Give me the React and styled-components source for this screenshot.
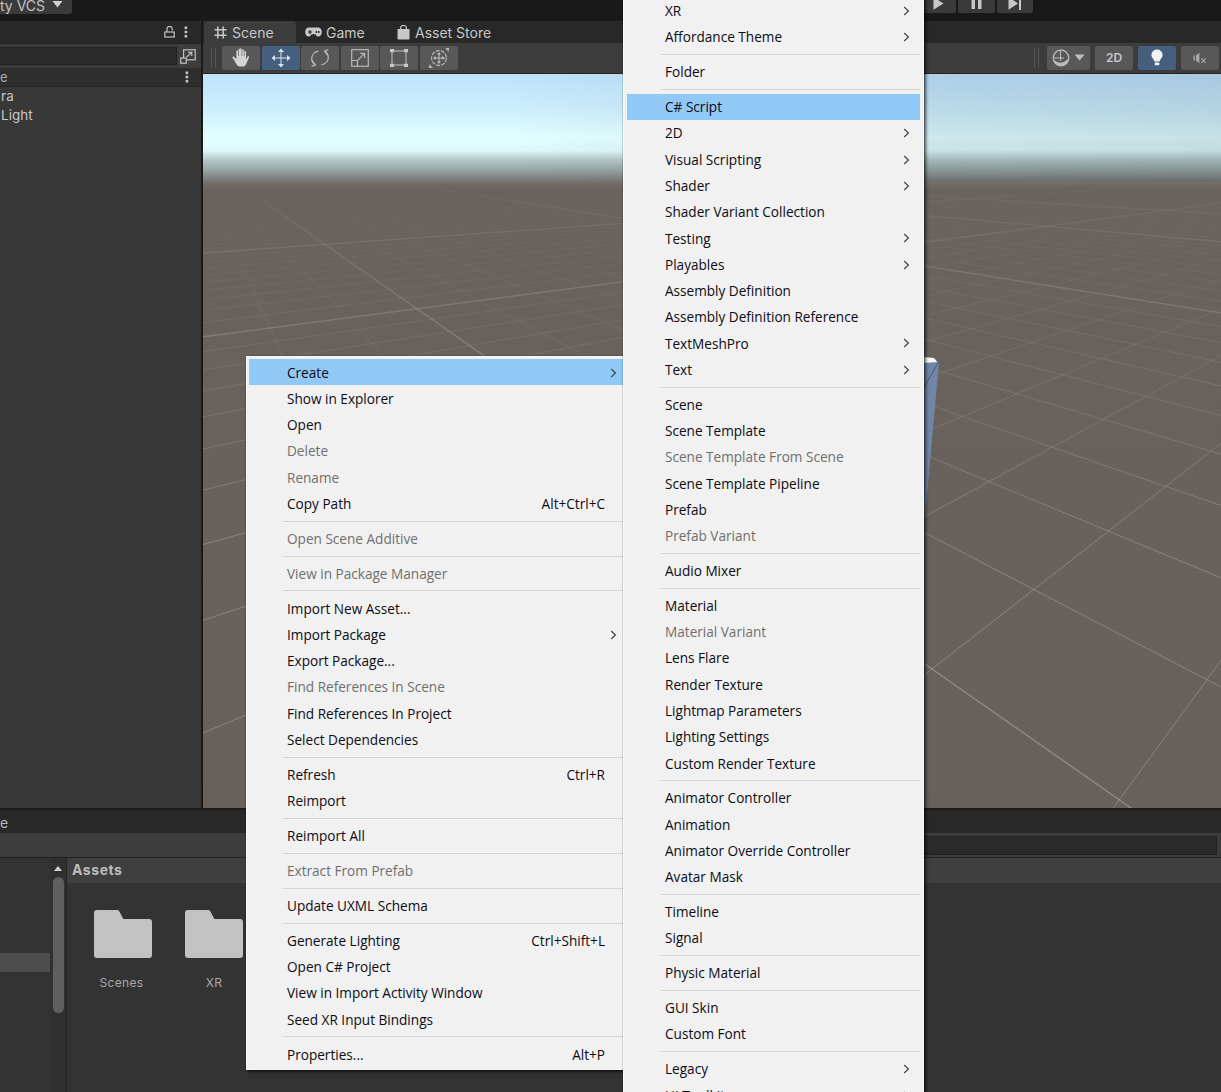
import React from 'react';
import styled, { createGlobalStyle } from 'styled-components';

const Global = createGlobalStyle`
  html, body { margin: 0; padding: 0; background: #191919; }
  #root { width: 1221px; height: 1092px; overflow: hidden; }
`;

const Page = styled.div`
  position: relative;
  width: 1221px;
  height: 1092px;
  overflow: hidden;
  background: #191919;
  font-family: Inter, "Liberation Sans", sans-serif;
  color: #c4c4c4;
  display: flex;
  flex-direction: column;
`;

/* ---------- top bar ---------- */
const TopBar = styled.div`
  height: 21px;
  flex: none;
  display: flex;
  align-items: flex-start;
  justify-content: space-between;
  padding-right: 188px;
  background: #191919;
`;
const VcsButton = styled.div`
  width: 72px;
  height: 14px;
  background: #3a3a3a;
  border-bottom-right-radius: 3px;
  display: flex;
  align-items: center;
  gap: 7px;
  font-size: 14px;
  color: #c2c2c2;
  white-space: nowrap;
  overflow: hidden;
  svg { flex: none; margin-top: -5px; }
  span { margin-top: -3px; }
`;
const PlayGroup = styled.div`
  display: flex;
  gap: 2px;
`;
const PlayBtn = styled.div`
  width: ${p => p.$w}px;
  height: 13px;
  background: #3a3a3a;
  border-bottom-left-radius: 2px;
  border-bottom-right-radius: 2px;
  display: flex;
  justify-content: center;
  align-items: flex-start;
`;

/* ---------- main ---------- */
const Main = styled.div`
  height: 787px;
  flex: none;
  display: grid;
  grid-template-columns: 201px 1fr;
  column-gap: 2px;
`;
const Panel = styled.div`
  display: flex;
  flex-direction: column;
  min-width: 0;
  background: #383838;
`;
const TabBar = styled.div`
  height: 22px;
  flex: none;
  background: #282828;
  display: flex;
  align-items: stretch;
`;
const LeftTabBar = styled(TabBar)`
  justify-content: flex-end;
  align-items: center;
  gap: 9px;
  padding-right: 13px;
  border-top-right-radius: 4px;
`;
const SearchRow = styled.div`
  height: 25px;
  flex: none;
  background: #3c3c3c;
  border-top: 1px solid #232323;
  box-sizing: border-box;
  display: flex;
  align-items: center;
`;
const SearchField = styled.div`
  flex: 1;
  height: 18px;
  background: #2a2a2a;
  border: 1px solid #212121;
  border-left: 0;
  box-sizing: border-box;
`;
const SearchAddon = styled.div`
  width: 22px;
  height: 20px;
  margin-right: 2px;
  display: flex;
  align-items: center;
  justify-content: center;
  background: #3e3e3e;
  border-radius: 3px;
`;
const TreeHeader = styled.div`
  height: 19px;
  flex: none;
  background: #2e2e2e;
  border-bottom: 1px solid #262626;
  box-sizing: border-box;
  display: flex;
  align-items: center;
  justify-content: space-between;
  padding-right: 12px;
  font-size: 13px;
  color: #aaa;
`;
const TreeList = styled.div`
  flex: 1;
  background: #383838;
  padding-left: 1px;
`;
const TreeRow = styled.div`
  height: 19px;
  line-height: 19px;
  font-size: 13.4px;
  letter-spacing: 0.1px;
  color: #c8c8c8;
`;

const Tab = styled.div`
  display: flex;
  align-items: center;
  gap: ${p => p.$gap}px;
  width: ${p => p.$w}px;
  padding-left: ${p => p.$pl}px;
  box-sizing: border-box;
  font-size: 14px;
  color: #c6c6c6;
  background: ${p => (p.$active ? '#3c3c3c' : 'transparent')};
  border-top-left-radius: 3px;
  border-top-right-radius: 3px;
  margin-left: ${p => p.$ml || 0}px;
`;
const Toolbar = styled.div`
  height: 31px;
  flex: none;
  box-sizing: border-box;
  background: #3c3c3c;
  border-bottom: 1px solid #232323;
  display: flex;
  align-items: center;
  justify-content: space-between;
  padding: 0 2px 1px 8px;
`;
const ToolGroup = styled.div`
  display: flex;
  align-items: center;
  gap: ${p => p.$gap || 1.5}px;
`;
const Grip = styled.div`
  width: 5px;
  height: 20px;
  border-left: 1px solid #555;
  border-right: 1px solid #555;
  box-sizing: border-box;
  margin-right: ${p => p.$mr}px;
`;
const ToolBtn = styled.div`
  width: ${p => p.$w || 38}px;
  height: 24px;
  border-radius: 2px;
  background: ${p => (p.$on ? '#44607e' : '#585858')};
  display: flex;
  align-items: center;
  justify-content: center;
  gap: 4px;
  color: #c8c8c8;
  font-size: 12px;
  font-weight: 600;
`;
const SceneView = styled.div`
  flex: 1;
  min-height: 0;
  background: #66605b;
  svg { display: block; }
`;

/* ---------- bottom ---------- */
const Bottom = styled.div`
  flex: 1;
  display: flex;
  flex-direction: column;
  border-top: 2px solid #1c1c1c;
  background: #333;
`;
const BottomTabs = styled.div`
  height: 23px;
  flex: none;
  background: #282828;
  font-size: 14px;
  line-height: 25px;
  color: #b8b8b8;
`;
const BottomTools = styled.div`
  height: 24px;
  flex: none;
  box-sizing: border-box;
  background: #3c3c3c;
  padding: 3px 4px 2px 650px;
`;
const BottomSearch = styled.div`
  height: 19px;
  background: #2a2a2a;
  border: 1px solid #212121;
  box-sizing: border-box;
`;
const Browser = styled.div`
  flex: 1;
  display: grid;
  grid-template-columns: 50px 17px 1fr;
  border-top: 1px solid #232323;
  min-height: 0;
`;
const FolderTree = styled.div`
  background: #333;
  padding-top: 95px;
`;
const TreeSel = styled.div`
  height: 19px;
  background: #4d4d4d;
`;
const ScrollTrack = styled.div`
  background: #303030;
  border-right: 1px solid #232323;
  display: flex;
  flex-direction: column;
  align-items: center;
  padding-top: 8px;
  gap: 6px;
`;
const ScrollUp = styled.div`
  width: 0;
  height: 0;
  border-left: 4px solid transparent;
  border-right: 4px solid transparent;
  border-bottom: 5px solid #d0d0d0;
`;
const ScrollThumb = styled.div`
  width: 11px;
  height: 136px;
  border-radius: 6px;
  background: #5f5f5f;
`;
const AssetArea = styled.div`
  display: flex;
  flex-direction: column;
  min-width: 0;
`;
const AssetHeader = styled.div`
  height: 25px;
  line-height: 23px;
  flex: none;
  padding-left: 5px;
  background: #3f3f3f;
  font-size: 14px;
  font-weight: 700;
  letter-spacing: 0.55px;
  color: #bdbdbd;
`;
const AssetGrid = styled.div`
  display: flex;
  gap: 33px;
  padding: 27px 0 0 27px;
`;
const AssetTile = styled.div`
  width: 58px;
  display: flex;
  flex-direction: column;
  align-items: center;
  gap: 17px;
  font-size: 12px;
  letter-spacing: 0.3px;
  color: #a8a8a8;
`;
const AssetLabel = styled.span`
  margin-left: ${p => p.$nudge || 0}px;
`;

/* ---------- context menus ---------- */
const Menu = styled.div`
  position: absolute;
  left: ${p => p.$x}px;
  top: ${p => p.$y}px;
  width: ${p => p.$w}px;
  box-sizing: border-box;
  padding: 2px ${p => p.$pad}px;
  background: #f1f1f1;
  border: 1px solid #f8f8f8;
  box-shadow: 2px 2px 3px rgba(0, 0, 0, 0.65), 0 0 1px rgba(0, 0, 0, 0.6);
  font-family: "Open Sans", "Noto Sans", sans-serif;
  font-size: 13.6px;
  color: #0c0c14;
`;
const Row = styled.div`
  height: 26.27px;
  box-sizing: border-box;
  display: flex;
  align-items: center;
  justify-content: space-between;
  padding: 0 22px 0 38px;
  position: relative;
  white-space: nowrap;
  color: ${p => (p.$off ? '#6f6f6f' : '#0c0c14')};
  background: ${p => (p.$hot ? '#90c8f6' : 'transparent')};
`;
const Chevron = styled.svg`
  position: absolute;
  right: 10px;
  top: 8.5px;
`;
const Sep = styled.div`
  height: 8.65px;
  box-sizing: border-box;
  margin-left: 34px;
  padding-top: 4px;
  &::after {
    content: '';
    display: block;
    height: 1px;
    background: #d6d6d6;
  }
`;

/* ---------- data ---------- */
const S = 'sep';
const leftMenu = [
  { t: 'Create', arrow: 1, hot: 1 }, { t: 'Show in Explorer' }, { t: 'Open' },
  { t: 'Delete', off: 1 }, { t: 'Rename', off: 1 }, { t: 'Copy Path', key: 'Alt+Ctrl+C' }, S,
  { t: 'Open Scene Additive', off: 1 }, S,
  { t: 'View in Package Manager', off: 1 }, S,
  { t: 'Import New Asset...' }, { t: 'Import Package', arrow: 1 }, { t: 'Export Package...' },
  { t: 'Find References In Scene', off: 1 }, { t: 'Find References In Project' }, { t: 'Select Dependencies' }, S,
  { t: 'Refresh', key: 'Ctrl+R' }, { t: 'Reimport' }, S,
  { t: 'Reimport All' }, S,
  { t: 'Extract From Prefab', off: 1 }, S,
  { t: 'Update UXML Schema' }, S,
  { t: 'Generate Lighting', key: 'Ctrl+Shift+L' }, { t: 'Open C# Project' },
  { t: 'View in Import Activity Window' }, { t: 'Seed XR Input Bindings' }, S,
  { t: 'Properties...', key: 'Alt+P' },
];
const rightMenu = [
  { t: 'XR', arrow: 1 }, { t: 'Affordance Theme', arrow: 1 }, S,
  { t: 'Folder' }, S,
  { t: 'C# Script', hot: 1 }, { t: '2D', arrow: 1 }, { t: 'Visual Scripting', arrow: 1 }, { t: 'Shader', arrow: 1 },
  { t: 'Shader Variant Collection' }, { t: 'Testing', arrow: 1 }, { t: 'Playables', arrow: 1 },
  { t: 'Assembly Definition' }, { t: 'Assembly Definition Reference' }, { t: 'TextMeshPro', arrow: 1 }, { t: 'Text', arrow: 1 }, S,
  { t: 'Scene' }, { t: 'Scene Template' }, { t: 'Scene Template From Scene', off: 1 }, { t: 'Scene Template Pipeline' },
  { t: 'Prefab' }, { t: 'Prefab Variant', off: 1 }, S,
  { t: 'Audio Mixer' }, S,
  { t: 'Material' }, { t: 'Material Variant', off: 1 }, { t: 'Lens Flare' }, { t: 'Render Texture' },
  { t: 'Lightmap Parameters' }, { t: 'Lighting Settings' }, { t: 'Custom Render Texture' }, S,
  { t: 'Animator Controller' }, { t: 'Animation' }, { t: 'Animator Override Controller' }, { t: 'Avatar Mask' }, S,
  { t: 'Timeline' }, { t: 'Signal' }, S,
  { t: 'Physic Material' }, S,
  { t: 'GUI Skin' }, { t: 'Custom Font' }, S,
  { t: 'Legacy', arrow: 1 }, { t: 'UI Toolkit', arrow: 1 },
];

const MenuList = ({ items, ...rest }) => (
  <Menu {...rest}>
    {items.map((it, i) =>
      it === S ? (
        <Sep key={i} />
      ) : (
        <Row key={i} $off={it.off} $hot={it.hot}>
          <span>{it.t}</span>
          {it.key && <span>{it.key}</span>}
          {it.arrow && (
            <Chevron width="7" height="10" viewBox="0 0 7 10">
              <path d="M1.2 1 L5.4 5 L1.2 9" fill="none" stroke="#444" strokeWidth="1.2" />
            </Chevron>
          )}
        </Row>
      )
    )}
  </Menu>
);

/* ---------- icons ---------- */
const Dots = () => (
  <svg width="4" height="12" viewBox="0 0 4 12" fill="#c4c4c4">
    <rect x="0.6" y="0.5" width="2.6" height="2.6" />
    <rect x="0.6" y="4.7" width="2.6" height="2.6" />
    <rect x="0.6" y="8.9" width="2.6" height="2.6" />
  </svg>
);
const Lock = () => (
  <svg width="11" height="12" viewBox="0 0 11 12" fill="none" stroke="#c4c4c4" strokeWidth="1.2">
    <rect x="0.8" y="6" width="9.4" height="5" />
    <path d="M3 6 V3 A2.6 2.6 0 0 1 8.2 3 V4.4" />
  </svg>
);
const ObjectPick = () => (
  <svg width="16" height="15" viewBox="0 0 16 15" fill="none" stroke="#c4c4c4" strokeWidth="1.2">
    <rect x="3.6" y="0.8" width="11.6" height="10" />
    <rect x="0.7" y="9" width="5.6" height="5.2" fill="#3e3e3e" />
    <path d="M6.6 8 L11.6 3.6 M8.2 3.4 H11.8 V7" />
  </svg>
);
const GridIcon = () => (
  <svg width="13" height="13" viewBox="0 0 13 13" stroke="#c8c8c8" strokeWidth="1.5" fill="none">
    <path d="M3.8 0.5 V12.5 M9.2 0.5 V12.5 M0.5 3.8 H12.5 M0.5 9.2 H12.5" />
  </svg>
);
const GameIcon = () => (
  <svg width="17" height="10" viewBox="0 0 17 10">
    <path d="M4 0.4 H13 C15.4 0.4 16.8 2.4 16.8 5 C16.8 7.8 15.4 9.6 13.2 9.6 C11.8 9.6 11.2 8 10.2 7.2 H6.8 C5.8 8 5.2 9.6 3.8 9.6 C1.6 9.6 0.2 7.8 0.2 5 C0.2 2.4 1.6 0.4 4 0.4 Z" fill="#c8c8c8" />
    <path d="M3 5 H7 M5 3 V7" stroke="#282828" strokeWidth="1.2" />
    <circle cx="11.4" cy="5" r="1" fill="#282828" />
    <circle cx="13.8" cy="5" r="1" fill="#282828" />
  </svg>
);
const BagIcon = () => (
  <svg width="13" height="15" viewBox="0 0 13 15">
    <path d="M0.5 4 H12.5 V13.4 A1.2 1.2 0 0 1 11.3 14.6 H1.7 A1.2 1.2 0 0 1 0.5 13.4 Z" fill="#c8c8c8" />
    <path d="M3.6 6 V2.8 A2.9 2.3 0 0 1 9.4 2.8 V6" fill="none" stroke="#c8c8c8" strokeWidth="1.2" />
  </svg>
);
const Hand = () => (
  <svg width="18" height="19" viewBox="0 0 18 19" fill="#d4d4d4">
    <path d="M8.1 1.1 C8.1 0.1 9.6 0.1 9.6 1.1 V8 H10.2 V2 C10.2 1 11.8 1 11.8 2 V8.4 H12.4 V3.8 C12.4 2.8 14 2.8 14 3.8 V11.4 L15.4 8.8 C16 7.8 17.5 8.5 17 9.6 L14.2 16 C13.5 17.7 12.4 18.6 10.6 18.6 H8.4 C6.6 18.6 5.6 17.8 4.7 16.4 L0.6 9.8 C0 8.8 1.2 7.9 2 8.8 L4.4 11 V3 C4.4 2 6 2 6 3 V8 H6.6 V1.6 C6.6 0.6 8.1 0.6 8.1 1.6 Z" />
  </svg>
);
const MoveTool = () => (
  <svg width="20" height="20" viewBox="0 0 20 20" fill="#d8e2ec" stroke="none">
    <path d="M10 0.5 L13 4 H7 Z M10 19.5 L13 16 H7 Z M0.5 10 L4 7 V13 Z M19.5 10 L16 7 V13 Z" />
    <path d="M10 4 V16 M4 10 H16" stroke="#d8e2ec" strokeWidth="1" />
  </svg>
);
const RotateTool = () => (
  <svg width="20" height="20" viewBox="0 0 20 20" fill="none" stroke="#b8b8b8" strokeWidth="1.3">
    <path d="M8.5 3.2 C4 4 1.5 7.4 1.7 11 C1.9 13.6 3.3 15.6 5 16.8" />
    <path d="M2.8 13.4 L5.4 17 L1.6 18.4" />
    <path d="M11.5 16.8 C16 16 18.5 12.6 18.3 9 C18.1 6.4 16.7 4.4 15 3.2" />
    <path d="M17.2 6.6 L14.6 3 L18.4 1.6" />
  </svg>
);
const ScaleTool = () => (
  <svg width="18" height="18" viewBox="0 0 18 18" fill="none" stroke="#b8b8b8" strokeWidth="1.2">
    <rect x="0.7" y="0.7" width="16.6" height="16.6" />
    <path d="M0.7 11.5 H6.5 V17.3" />
    <path d="M7 11 L13.4 4.6 M9 4.4 H13.6 V9" />
  </svg>
);
const RectTool = () => (
  <svg width="18" height="18" viewBox="0 0 18 18" fill="none" stroke="#b8b8b8" strokeWidth="1.1">
    <rect x="2" y="2" width="14" height="14" />
    <g fill="#c8c8c8" stroke="none">
      <rect x="0" y="0" width="4" height="3.2" />
      <rect x="14" y="0" width="4" height="3.2" />
      <rect x="0" y="14.8" width="4" height="3.2" />
      <rect x="14" y="14.8" width="4" height="3.2" />
    </g>
  </svg>
);
const TransformTool = () => (
  <svg width="20" height="20" viewBox="0 0 20 20" fill="none" stroke="#bcbcbc" strokeWidth="1.1">
    <circle cx="10" cy="10" r="7.4" strokeDasharray="4 1.2" />
    <path d="M10 5 V15 M5 10 H15" />
    <path d="M10 4.2 L12 6.6 H8 Z M10 15.8 L12 13.4 H8 Z M4.2 10 L6.6 8 V12 Z M15.8 10 L13.4 8 V12 Z" fill="#c8c8c8" stroke="none" />
    <path d="M0.6 19.4 L2.6 19.2 L0.8 17.4 Z M19.4 0.6 L17.4 0.8 L19.2 2.6 Z" fill="#c8c8c8" />
  </svg>
);
const Globe = () => (
  <>
    <svg width="18" height="18" viewBox="0 0 18 18">
      <circle cx="9" cy="9" r="7.8" fill="none" stroke="#bdbdbd" strokeWidth="1.2" />
      <path d="M1.2 9.6 C4 15 12 15.4 16.8 9 C16.8 13.6 13.4 16.8 9 16.8 C4.6 16.8 1.4 13.6 1.2 9.6 Z" fill="#bdbdbd" />
      <path d="M8.6 1.4 V12 M1.4 9 H12 " stroke="#bdbdbd" strokeWidth="1" />
    </svg>
    <svg width="11" height="7" viewBox="0 0 11 7"><path d="M0.5 0.5 H10.5 L5.5 6.5 Z" fill="#bdbdbd" /></svg>
  </>
);
const Bulb = () => (
  <svg width="12" height="17" viewBox="0 0 12 17">
    <path d="M6 0.4 A5.6 5.6 0 0 1 9.4 10.4 L8.6 12.4 H3.4 L2.6 10.4 A5.6 5.6 0 0 1 6 0.4 Z" fill="#f2f2f2" />
    <rect x="3.6" y="13.4" width="4.8" height="2.8" rx="1" fill="#f2f2f2" />
  </svg>
);
const Audio = () => (
  <svg width="14" height="12" viewBox="0 0 14 12">
    <path d="M0.5 3.5 H2 V8.5 H0.5 Z M3 3.5 L6.4 0.6 V11.4 L3 8.5 Z" fill="#a8a8a8" />
    <path d="M8.4 6.4 L12.6 10.8 M12.6 6.4 L8.4 10.8" stroke="#a8a8a8" strokeWidth="1.2" />
  </svg>
);
const FolderIcon = () => (
  <svg width="58" height="48" viewBox="0 0 58 48">
    <path d="M3 0 H23 C24.2 0 24.8 0.6 25.4 1.6 L29.4 9 H55 A3 3 0 0 1 58 12 V45 A3 3 0 0 1 55 48 H3 A3 3 0 0 1 0 45 V3 A3 3 0 0 1 3 0 Z" fill="#c2c2c2" />
  </svg>
);

/* ---------- scene drawing ---------- */
const ray = (vx, vy, dirX, slope) => {
  const span = 1800;
  return { x1: vx, y1: vy, x2: vx + dirX * span, y2: vy + slope * span };
};
const familyA = [];
for (let k = -2; k <= 34; k++) {
  const inv = 1.43 + 0.49 * k;
  familyA.push({ ...ray(190, 150, 1, 1 / inv), major: k % 10 === 0 });
}
const invB = [0.73, 1.28, 1.84, 2.4, 2.98, 3.56, 4.14, 4.72, 5.3, 5.88, 6.46, 7.05, 7.63];
for (let i = 1; i <= 20; i++) invB.push(7.63 + 0.652 * i);
const familyB = invB.map((inv, i) => ({
  ...ray(1590, 155, -1, 1 / inv),
  major: i === 12 || i === 22,
}));

const Scene = () => (
  <svg width="1018" height="734" viewBox="203 74 1018 734">
    <defs>
      <linearGradient id="sky" x1="0" y1="74" x2="0" y2="190" gradientUnits="userSpaceOnUse">
        <stop offset="0" stopColor="#bfe2fb" />
        <stop offset="0.3" stopColor="#cdeefd" />
        <stop offset="0.55" stopColor="#e2ffff" />
        <stop offset="0.66" stopColor="#dff8f9" />
        <stop offset="0.74" stopColor="#b4c8c9" />
        <stop offset="0.84" stopColor="#939f9f" />
        <stop offset="0.95" stopColor="#6f6b67" />
        <stop offset="1" stopColor="#6a625d" />
      </linearGradient>
      <linearGradient id="shade" x1="203" y1="0" x2="1221" y2="0" gradientUnits="userSpaceOnUse">
        <stop offset="0.3" stopColor="#000" stopOpacity="0" />
        <stop offset="0.72" stopColor="#102030" stopOpacity="0.1" />
        <stop offset="1" stopColor="#102030" stopOpacity="0.13" />
      </linearGradient>
      <linearGradient id="ground" x1="0" y1="190" x2="0" y2="808" gradientUnits="userSpaceOnUse">
        <stop offset="0" stopColor="#6a625d" />
        <stop offset="1" stopColor="#67605b" />
      </linearGradient>
      <linearGradient id="minor" x1="0" y1="190" x2="0" y2="560" gradientUnits="userSpaceOnUse">
        <stop offset="0" stopColor="#b0b0ac" stopOpacity="0" />
        <stop offset="0.25" stopColor="#b0b0ac" stopOpacity="0.07" />
        <stop offset="0.6" stopColor="#b0b0ac" stopOpacity="0.22" />
        <stop offset="1" stopColor="#b0b0ac" stopOpacity="0.45" />
      </linearGradient>
      <linearGradient id="major" x1="0" y1="175" x2="0" y2="420" gradientUnits="userSpaceOnUse">
        <stop offset="0" stopColor="#b0b0ac" stopOpacity="0" />
        <stop offset="0.3" stopColor="#b0b0ac" stopOpacity="0.18" />
        <stop offset="1" stopColor="#b0b0ac" stopOpacity="0.5" />
      </linearGradient>
      <clipPath id="groundClip"><rect x="203" y="170" width="1018" height="638" /></clipPath>
    </defs>
    <rect x="203" y="74" width="1018" height="116" fill="url(#sky)" />
    <rect x="203" y="74" width="1018" height="108" fill="url(#shade)" />
    <rect x="203" y="190" width="1018" height="618" fill="url(#ground)" />
    <g clipPath="url(#groundClip)" fill="none">
      {[...familyA, ...familyB].map((l, i) => (
        <line key={i} x1={l.x1} y1={l.y1} x2={l.x2} y2={l.y2}
          stroke={l.major ? 'url(#major)' : 'url(#minor)'} strokeWidth={l.major ? 1.4 : 1} />
      ))}
    </g>
    <polygon points="923,357 934,358 939,364 923,363" fill="#fafafa" />
    <polygon points="923,363 939,362 925,518 923,518" fill="#7186a6" />
    <path d="M938.5 362 L923 389" stroke="#3f4c60" strokeWidth="0.8" />
  </svg>
);

export default function App() {
  return (
    <Page>
      <Global />
      <TopBar>
        <VcsButton>
          <span>ty VCS</span>
          <svg width="11" height="8" viewBox="0 0 11 8"><path d="M0.5 0 H10.5 L5.5 6.5 Z" fill="#d0d0d0" /></svg>
        </VcsButton>
        <PlayGroup>
          <PlayBtn $w={35}>
            <svg width="11" height="10" viewBox="0 0 11 10"><path d="M0.5 0 H5 L10.5 3.6 L0.5 9.8 Z" fill="#c8c8c8" /></svg>
          </PlayBtn>
          <PlayBtn $w={37}>
            <svg width="11" height="9" viewBox="0 0 11 9"><path d="M0.5 0 H4 V9 H0.5 Z M7 0 H10.5 V9 H7 Z" fill="#c8c8c8" /></svg>
          </PlayBtn>
          <PlayBtn $w={36}>
            <svg width="14" height="10" viewBox="0 0 14 10"><path d="M0.5 0 H5 L10 3.6 L0.5 9.8 Z M11 0 H13 V10 H11 Z" fill="#c8c8c8" /></svg>
          </PlayBtn>
        </PlayGroup>
      </TopBar>

      <Main>
        <Panel>
          <LeftTabBar><Lock /><Dots /></LeftTabBar>
          <SearchRow>
            <SearchField />
            <SearchAddon><ObjectPick /></SearchAddon>
          </SearchRow>
          <TreeHeader><span>e</span><Dots /></TreeHeader>
          <TreeList>
            <TreeRow>ra</TreeRow>
            <TreeRow>Light</TreeRow>
          </TreeList>
        </Panel>

        <Panel>
          <TabBar>
            <Tab $active $w={92} $pl={10} $gap={5} $ml={1}><GridIcon />Scene</Tab>
            <Tab $w={92} $pl={9} $gap={4}><GameIcon />Game</Tab>
            <Tab $w={110} $pl={9} $gap={5}><BagIcon />Asset Store</Tab>
          </TabBar>
          <Toolbar>
            <ToolGroup>
              <Grip $mr={4.5} />
              <ToolBtn><Hand /></ToolBtn>
              <ToolBtn $on><MoveTool /></ToolBtn>
              <ToolBtn><RotateTool /></ToolBtn>
              <ToolBtn><ScaleTool /></ToolBtn>
              <ToolBtn><RectTool /></ToolBtn>
              <ToolBtn><TransformTool /></ToolBtn>
            </ToolGroup>
            <ToolGroup $gap={5}>
              <Grip $mr={3} />
              <ToolBtn $w={43}><Globe /></ToolBtn>
              <ToolBtn>2D</ToolBtn>
              <ToolBtn $on><Bulb /></ToolBtn>
              <ToolBtn><Audio /></ToolBtn>
            </ToolGroup>
          </Toolbar>
          <SceneView><Scene /></SceneView>
        </Panel>
      </Main>

      <Bottom>
        <BottomTabs>e</BottomTabs>
        <BottomTools><BottomSearch /></BottomTools>
        <Browser>
          <FolderTree><TreeSel /></FolderTree>
          <ScrollTrack><ScrollUp /><ScrollThumb /></ScrollTrack>
          <AssetArea>
            <AssetHeader>Assets</AssetHeader>
            <AssetGrid>
              <AssetTile><FolderIcon /><AssetLabel $nudge={-3}>Scenes</AssetLabel></AssetTile>
              <AssetTile><FolderIcon /><AssetLabel>XR</AssetLabel></AssetTile>
            </AssetGrid>
          </AssetArea>
        </Browser>
      </Bottom>

      <MenuList items={leftMenu} $x={246} $y={356} $w={384} $pad={2} />
      <MenuList items={rightMenu} $x={623} $y={-5.5} $w={301} $pad={3} />
    </Page>
  );
}
